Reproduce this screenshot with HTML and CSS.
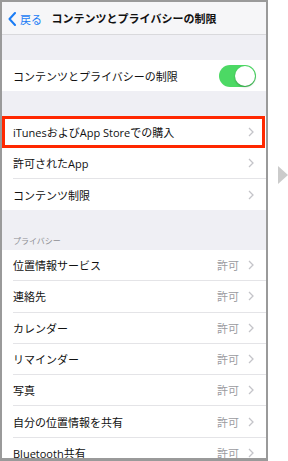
FILE: index.html
```html
<!DOCTYPE html>
<html lang="ja">
<head>
    <meta charset="UTF-8">
    <meta name="viewport" content="width=device-width, initial-scale=1.0">
    <title>コンテンツとプライバシーの制限</title>
    <link rel="stylesheet" href="styles.css">
</head>
<body>
    <div class="page">
        <div class="phone">
            <header class="nav">
                <span class="back">
                    <svg class="back-icon" width="8" height="14" viewBox="0 0 8 14"><path d="M7 1 L1.5 7 L7 13" fill="none" stroke="#1a7cf5" stroke-width="2" stroke-linecap="round" stroke-linejoin="round"/></svg>
                    戻る
                </span>
                <h1 class="title">コンテンツとプライバシーの制限</h1>
            </header>

            <div class="gap"></div>
            <ul class="group">
                <li class="row">
                    <div class="row-inner">
                        <span class="label">コンテンツとプライバシーの制限</span>
                        <span class="switch"><span class="knob"></span></span>
                    </div>
                </li>
            </ul>

            <div class="gap"></div>
            <ul class="group">
                <li class="row highlight">
                    <div class="row-inner">
                        <span class="label">iTunesおよびApp Storeでの購入</span>
                        <svg class="chev" width="6" height="10" viewBox="0 0 6 10"><path d="M1 1 L5 5 L1 9" fill="none" stroke="#c4c4c9" stroke-width="1.3"/></svg>
                    </div>
                </li>
                <li class="row">
                    <div class="row-inner">
                        <span class="label">許可されたApp</span>
                        <svg class="chev" width="6" height="10" viewBox="0 0 6 10"><path d="M1 1 L5 5 L1 9" fill="none" stroke="#c4c4c9" stroke-width="1.3"/></svg>
                    </div>
                </li>
                <li class="row last">
                    <div class="row-inner">
                        <span class="label">コンテンツ制限</span>
                        <svg class="chev" width="6" height="10" viewBox="0 0 6 10"><path d="M1 1 L5 5 L1 9" fill="none" stroke="#c4c4c9" stroke-width="1.3"/></svg>
                    </div>
                </li>
            </ul>

            <div class="section-head">プライバシー</div>
            <ul class="group privacy">
                <li class="row"><div class="row-inner"><span class="label">位置情報サービス</span><span class="value">許可</span><svg class="chev" width="6" height="10" viewBox="0 0 6 10"><path d="M1 1 L5 5 L1 9" fill="none" stroke="#c4c4c9" stroke-width="1.3"/></svg></div></li>
                <li class="row"><div class="row-inner"><span class="label">連絡先</span><span class="value">許可</span><svg class="chev" width="6" height="10" viewBox="0 0 6 10"><path d="M1 1 L5 5 L1 9" fill="none" stroke="#c4c4c9" stroke-width="1.3"/></svg></div></li>
                <li class="row"><div class="row-inner"><span class="label">カレンダー</span><span class="value">許可</span><svg class="chev" width="6" height="10" viewBox="0 0 6 10"><path d="M1 1 L5 5 L1 9" fill="none" stroke="#c4c4c9" stroke-width="1.3"/></svg></div></li>
                <li class="row"><div class="row-inner"><span class="label">リマインダー</span><span class="value">許可</span><svg class="chev" width="6" height="10" viewBox="0 0 6 10"><path d="M1 1 L5 5 L1 9" fill="none" stroke="#c4c4c9" stroke-width="1.3"/></svg></div></li>
                <li class="row"><div class="row-inner"><span class="label">写真</span><span class="value">許可</span><svg class="chev" width="6" height="10" viewBox="0 0 6 10"><path d="M1 1 L5 5 L1 9" fill="none" stroke="#c4c4c9" stroke-width="1.3"/></svg></div></li>
                <li class="row"><div class="row-inner"><span class="label">自分の位置情報を共有</span><span class="value">許可</span><svg class="chev" width="6" height="10" viewBox="0 0 6 10"><path d="M1 1 L5 5 L1 9" fill="none" stroke="#c4c4c9" stroke-width="1.3"/></svg></div></li>
                <li class="row"><div class="row-inner"><span class="label">Bluetooth共有</span><span class="value">許可</span><svg class="chev" width="6" height="10" viewBox="0 0 6 10"><path d="M1 1 L5 5 L1 9" fill="none" stroke="#c4c4c9" stroke-width="1.3"/></svg></div></li>
            </ul>
        </div>
        <div class="next-arrow"></div>
    </div>
</body>
</html>
```

FILE: styles.css
```css
*{
   margin: 0;
   padding: 0;
   box-sizing: border-box;
}

body{
   font-family: "Open Sans", "Noto Sans CJK JP", sans-serif;
   font-size: 11px;
   background-color: white;
   color: #111;
}

.page{
   width: 288px;
   height: 461px;
   display: flex;
   align-items: center;
}

.phone{
   width: 268px;
   height: 461px;
   border: 2px solid #9a9a9a;
   border-bottom-width: 3px;
   background-color: #efeff4;
   overflow: hidden;
   flex-shrink: 0;
}

.nav{
   height: 33px;
   background-color: #f6f6f8;
   border-bottom: 1px solid #d9d9dc;
   display: flex;
   align-items: center;
   justify-content: center;
   position: relative;
}

.back{
   position: absolute;
   left: 6px;
   top: 9px;
   display: flex;
   align-items: center;
   gap: 4px;
   color: #1a7cf5;
   font-size: 11px;
}

.title{
   font-size: 11px;
   font-weight: bold;
   color: #111;
}

.gap{
   height: 25px;
}

.group{
   list-style: none;
   background-color: white;
}

.row{
   padding-left: 11px;
   height: 31px;
}

.row-inner{
   height: 100%;
   display: flex;
   align-items: center;
   padding-right: 12px;
   border-bottom: 1px solid #e4e4e7;
}

.row.last .row-inner,
.group .row:only-child .row-inner,
.privacy .row:last-child .row-inner{
   border-bottom: none;
}

.label{
   flex: 1;
   font-size: 11px;
   color: #111;
}

.value{
   color: #9b9b9f;
   margin-right: 9px;
}

.chev{
   display: block;
}

.highlight{
   height: 32px;
   border: 3px solid #ff2800;
   margin-right: 1px;
   padding-left: 8px;
}

.highlight .row-inner{
   border-bottom: none;
   padding-right: 8px;
}

.switch{
   width: 37px;
   height: 22px;
   border-radius: 11px;
   background-color: #4cd964;
   display: flex;
   align-items: center;
   justify-content: flex-end;
   padding: 1px;
   margin-right: -2px;
}

.knob{
   width: 20px;
   height: 20px;
   border-radius: 50%;
   background-color: white;
   box-shadow: 0 1px 2px rgba(0, 0, 0, 0.3);
}

.section-head{
   height: 40px;
   padding: 25px 0 0 11px;
   font-size: 8px;
   color: #8e8e93;
}

.privacy .row{
   height: 31.3px;
}

.next-arrow{
   margin-left: 10px;
   margin-top: -112px;
   width: 0;
   height: 0;
   border-top: 9px solid transparent;
   border-bottom: 9px solid transparent;
   border-left: 10px solid #cbcbcb;
}
```
